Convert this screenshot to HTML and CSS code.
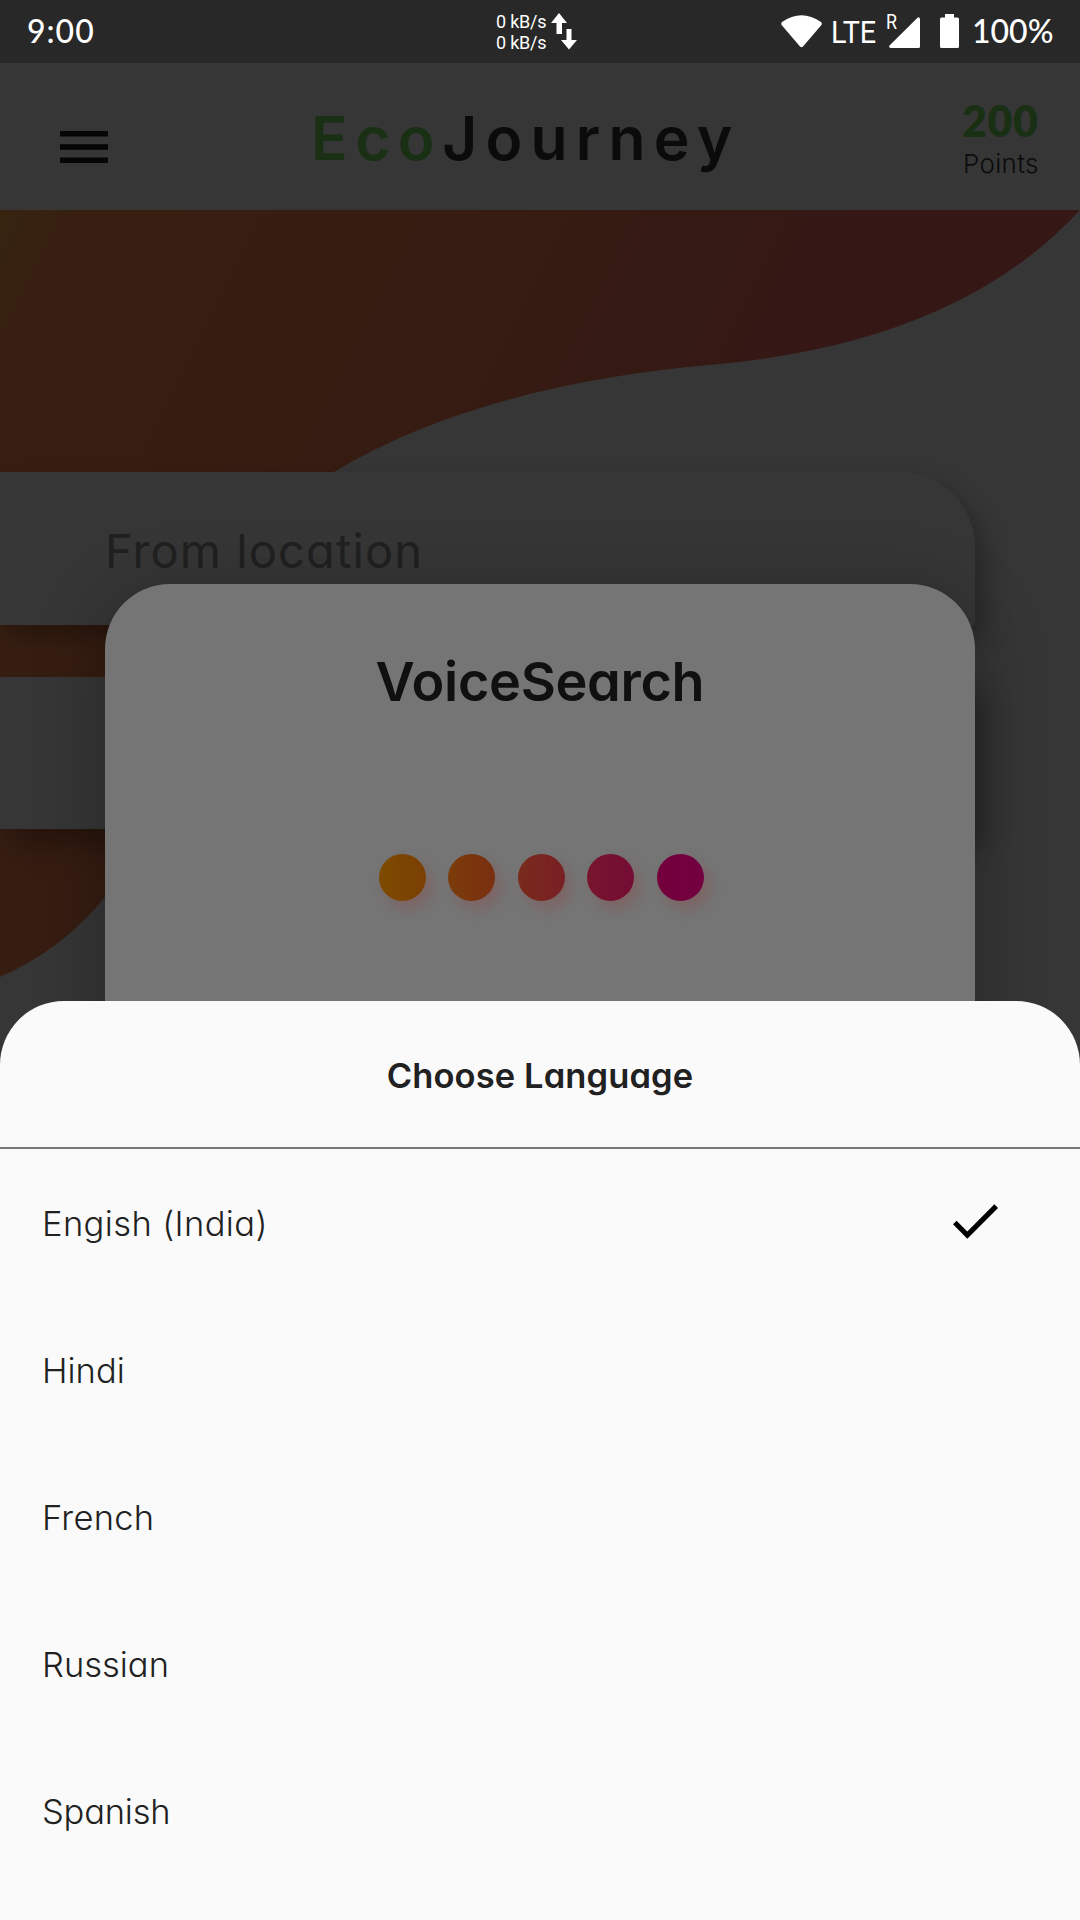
FILE: index.html
```html
<!DOCTYPE html>
<html lang="en">
<head>
<meta charset="utf-8">
<title>EcoJourney</title>
<link rel="stylesheet" href="styles.css">
</head>
<body>
<div class="screen">
  <div class="status-bar">
    <span class="clock">9:00</span>
    <div class="network">
      <div class="rates"><span>0 kB/s</span><span>0 kB/s</span></div>
      <svg class="arrows" width="27" height="37" viewBox="0 0 27 37"><path d="M8 0 16 10H11V21H5.500V10H0Z"/><path d="M15.500 16H20.500V27H26L18 36.500 10 27H15.500Z"/></svg>
    </div>
    <svg class="wifi" width="41" height="33" viewBox="0 0 41 33"><path d="M1 7Q20.500-6.500 40 7Q41.500 8.500 40 10.500L22 31.500Q20.500 33 19 31.500L1 10.500Q-.5 8.500 1 7Z"/></svg>
    <span class="lte">LTE</span>
    <span class="roaming">R</span>
    <svg class="signal" width="31" height="31" viewBox="0 0 31 31"><path d="M31 2V29.500Q31 31 29.500 31H1.500Q-.5 30.500 .5 28.500L28.500 .8Q30.500-.5 31 2Z"/></svg>
    <svg class="battery" width="19" height="34" viewBox="0 0 19 34"><path d="M5 0H14V3.500H17.500Q19 3.500 19 5V32.500Q19 34 17.500 34H1.500Q0 34 0 32.500V5Q0 3.500 1.500 3.500H5Z"/></svg>
    <span class="percent">100%</span>
  </div>
  <header class="app-bar">
    <svg class="menu" width="48" height="32" viewBox="0 0 48 32"><path d="M0 0H48V5.400H0ZM0 13.300H48V18.700H0ZM0 26.600H48V32H0Z"/></svg>
    <h1 class="brand"><span class="eco">Eco</span>Journey</h1>
    <div class="points"><strong>200</strong><span>Points</span></div>
  </header>
  <main class="content">
    <svg class="wave" width="1080" height="791" viewBox="0 0 1080 791">
      <defs><linearGradient id="warm" gradientUnits="userSpaceOnUse" x1="0" y1="0" x2="800" y2="400"><stop offset="0" stop-color="#362410"/><stop offset=".08" stop-color="#371f11"/><stop offset=".5" stop-color="#361c12"/><stop offset=".85" stop-color="#351815"/><stop offset="1" stop-color="#351715"/></linearGradient></defs>
      <path fill="url(#warm)" d="M0 0H1080Q960 131 720 154Q480 174 334 262C220 340 190 600 105 687Q62 740 0 767Z"/>
    </svg>
    <div class="field from">From location</div>
    <div class="field to"></div>
  </main>
  <section class="voice">
    <h2>VoiceSearch</h2>
    <div class="dots"><i class="d1"></i><i class="d2"></i><i class="d3"></i><i class="d4"></i><i class="d5"></i></div>
  </section>
  <section class="sheet">
    <h3 class="sheet-title">Choose Language</h3>
    <ul class="languages">
      <li><span class="english">Engish (India)</span><svg class="check" width="45" height="35" viewBox="3.410 5.590 17.590 13.410"><path d="M9 16.170 4.830 12 3.410 13.410 9 19 21 7 19.590 5.590Z"/></svg></li>
      <li><span>Hindi</span></li>
      <li><span class="french">French</span></li>
      <li><span>Russian</span></li>
      <li><span class="spanish">Spanish</span></li>
    </ul>
  </section>
</div>
</body>
</html>
```
FILE: styles.css
```css
* { box-sizing: border-box; margin: 0; padding: 0; }
body { background: #363636; font-family: Inter, "Open Sans", sans-serif; font-feature-settings: "cv11"; }
svg { display: block; flex: none; }
.screen { position: relative; width: 1080px; height: 1920px; overflow: hidden; background: #363636; display: flex; flex-direction: column; }

.status-bar { height: 63px; flex: none; background: #282828; color: #fff; fill: #fff; display: flex; align-items: flex-start; font-family: Lato, sans-serif; font-size: 32px; line-height: 38px; font-weight: 500; }
.clock { width: 468px; padding: 12px 0 0 27px; letter-spacing: 1px; }
.network { display: flex; width: 285px; padding: 11px 0 0 28px; }
.rates { display: flex; flex-direction: column; width: 55px; font: 400 18px/21px Roboto, sans-serif; letter-spacing: -.2px; white-space: nowrap; }
.arrows { margin-top: 2px; }
.wifi { margin: 15px 9px 0 28px; }
.lte { width: 55px; padding-top: 13px; font-family: Roboto, sans-serif; font-weight: 400; white-space: nowrap; transform: scaleX(.9); transform-origin: 0 0; }
.roaming { width: 0; padding-top: 12px; font: 400 21px/20px Roboto, sans-serif; transform: scaleX(.85); transform-origin: 0 0; }
.signal { margin: 17px 20px 0 3px; }
.battery { margin: 14px 13px 0 0; }
.percent { padding-top: 12px; }

.app-bar { height: 147px; flex: none; display: flex; align-items: flex-start; color: #0b0b0b; }
.menu { margin: 68px 0 0 60px; fill: #050505; }
.brand { width: 651px; padding-left: 203px; box-sizing: content-box; font-size: 60.5px; line-height: 72px; font-weight: 600; margin-top: 39px; letter-spacing: 8.200px; white-space: nowrap; }
.eco { color: #193014; letter-spacing: 7.500px; }
.points { display: flex; flex-direction: column; }
.points strong { font-family: Lato, sans-serif; font-size: 43px; line-height: 50px; font-weight: 800; margin-top: 33px; letter-spacing: .5px; color: #193014; }
.points span { font-size: 26px; line-height: 30px; font-weight: 300; margin: 3px 0 0 1px; letter-spacing: .3px; }

.content { position: relative; flex: 1; padding-top: 262px; display: flex; flex-direction: column; gap: 52px; }
.wave { position: absolute; left: 0; top: 0; }
.field { position: relative; width: 975px; height: 153px; background: #363636; box-shadow: 8px 12px 26px rgba(0,0,0,.3); color: #202020; font-size: 47px; line-height: 56px; padding: 51px 0 0 105px; letter-spacing: 1.100px; }
.from { border-radius: 0 75px 0 0; }
.to { height: 152px; box-shadow: 8px 16px 26px rgba(0,0,0,.3); }

.voice { position: absolute; left: 105px; top: 584px; width: 870px; height: 500px; border-radius: 65px; background: #757575; box-shadow: 0 12px 70px rgba(0,0,0,.3); display: flex; flex-direction: column; align-items: center; }
.voice h2 { margin-top: 65px; font-size: 54px; line-height: 66px; font-weight: 600; letter-spacing: -.3px; color: #101010; }
.dots { display: flex; gap: 22.500px; margin: 139px 0 0 2px; }
.dots i { width: 47px; height: 47px; border-radius: 50%; box-shadow: 6px 8px 13px rgba(150,60,60,.3); }
.d1 { background: linear-gradient(90deg, #7d4b00, #7b3f04); }
.d2 { background: linear-gradient(90deg, #7b3c0a, #7a2f10); }
.d3 { background: linear-gradient(90deg, #7a2b1b, #781f25); }
.d4 { background: linear-gradient(90deg, #77152d, #750c35); }
.d5 { background: linear-gradient(90deg, #74003c, #720041); }

.sheet { position: absolute; left: 0; top: 1001px; width: 1080px; height: 919px; border-radius: 64px 64px 0 0; background: #fafafa; color: #212121; }
.sheet-title { height: 148px; border-bottom: 2px solid #777; padding-top: 54px; text-align: center; font-size: 34.500px; line-height: 42px; font-weight: 600; letter-spacing: .1px; }
.languages { list-style: none; }
.languages li { height: 147px; display: flex; justify-content: space-between; padding: 54px 82px 0 42px; font-size: 34.500px; line-height: 42px; font-weight: 300; }
.english { letter-spacing: .38px; }
.french { letter-spacing: .25px; }
.spanish { letter-spacing: -.2px; }
.check { fill: #000; margin-top: 1px; }
```
